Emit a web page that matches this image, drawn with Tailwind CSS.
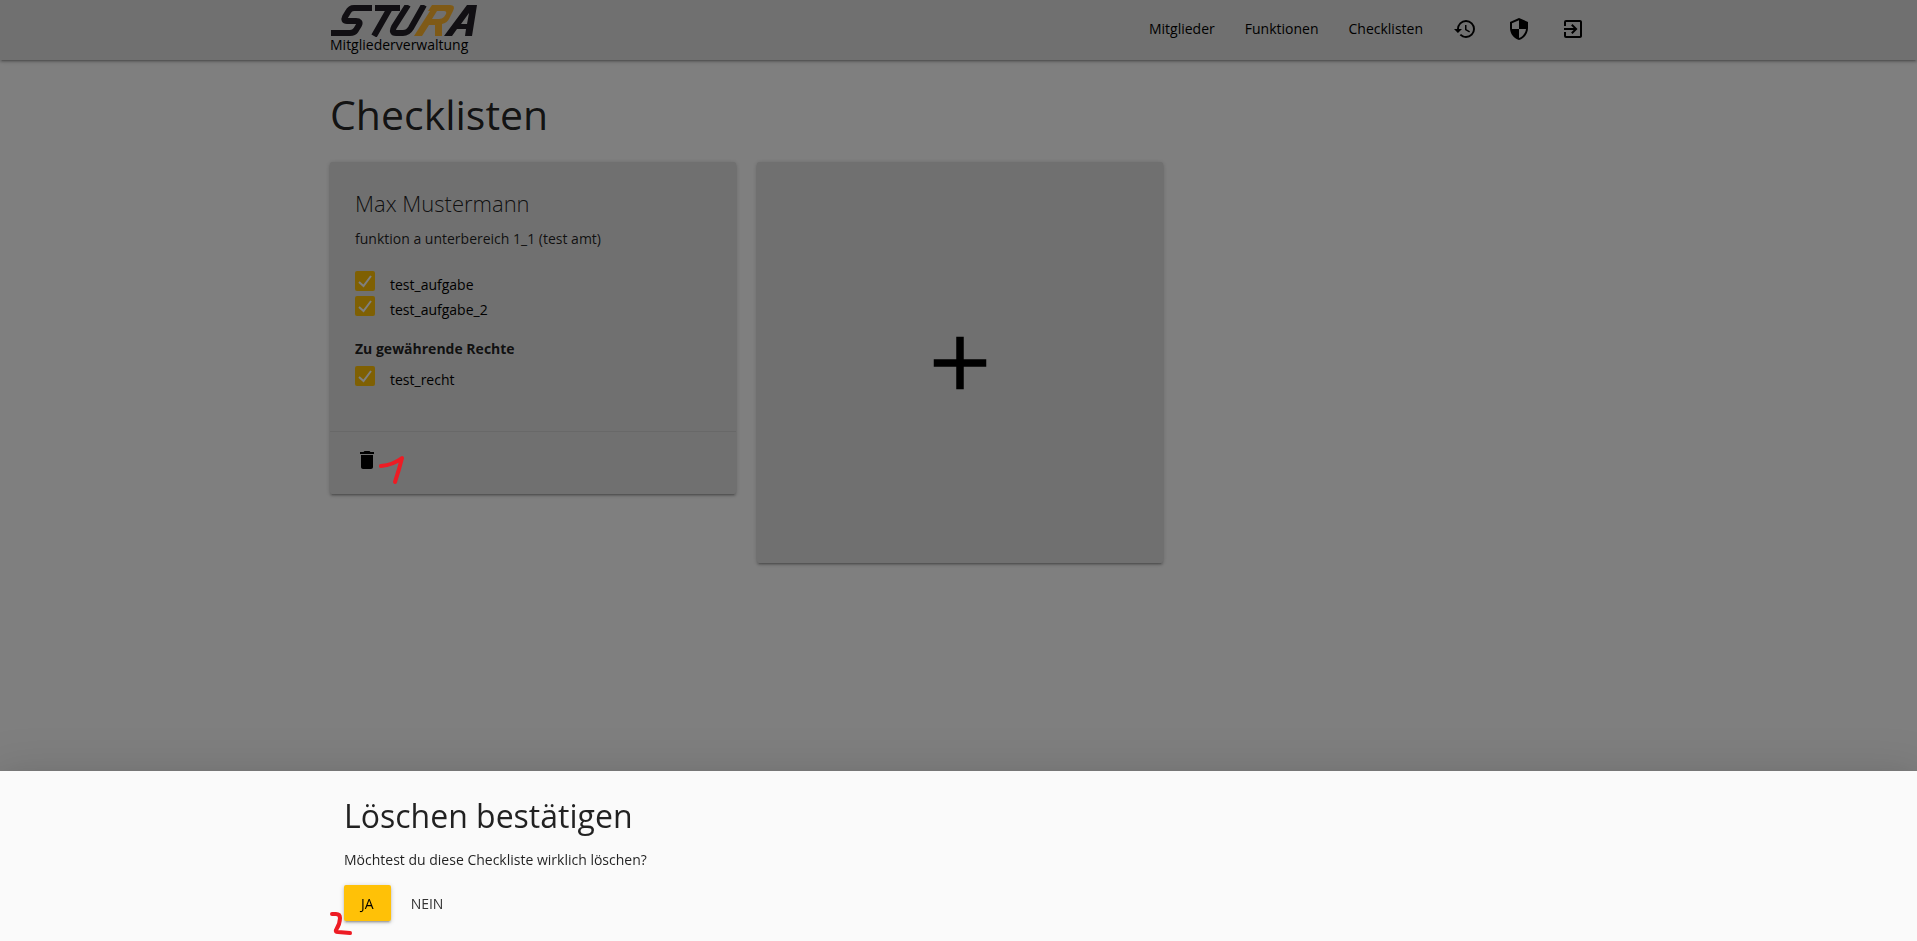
<!DOCTYPE html>
<html lang="de">
<head>
<meta charset="utf-8">
<title>STURA Mitgliederverwaltung</title>
<script src="https://cdn.jsdelivr.net/npm/@tailwindcss/browser@4"></script>
</head>
<body class="min-h-screen overflow-hidden bg-white font-['Open_Sans','Noto_Sans',sans-serif] text-[14px] leading-[21px] text-black/87">
<header class="h-[60px] bg-[#e0e0e0] shadow-[0_2px_2px_0_rgba(0,0,0,0.14),0_3px_1px_-2px_rgba(0,0,0,0.12),0_1px_5px_0_rgba(0,0,0,0.2)]">
  <div class="mx-auto flex h-full max-w-[1283px] items-start justify-between pl-[13px] text-black">
    <a href="#" class="flex flex-col pt-[5px]">
      <svg class="h-[32px] w-[148px]" viewBox="0 0 148 32" aria-label="STURA" role="img">
        <g fill="none" stroke="#231f26" stroke-width="6">
          <path d="M42 3H24Q20 3 18 7L15 12Q13 16 17 16H26Q31 16 29 20L26 25Q24 28 20 28H1"/>
          <path d="M45 3H70M60 3L44 31" />
          <path d="M78 0L64 22Q61 28 66 28H73Q78 28 81 23L94 0"/>
        </g>
        <path d="M137 0H147L142 31H135L136 24H127L122 31H114ZM139 8L131 19H137Z" fill="#231f26" fill-rule="evenodd"/>
        <path d="M102 0H120Q126 0 123 6L119 14Q117 18 112 19L112 31H105L105 20H99L92 31H84L100 6H98ZM107 6L102 14H109Q112 14 114 12L116 9Q117 6 114 6Z" fill="#ffb52e" fill-rule="evenodd"/>
      </svg>
      <span class="-mt-[2px] leading-[20px]">Mitgliederverwaltung</span>
    </a>
    <nav class="flex h-[57px] items-center">
      <a href="#" class="px-[15px]">Mitglieder</a>
      <a href="#" class="px-[15px]">Funktionen</a>
      <a href="#" class="px-[15px]">Checklisten</a>
      <a href="#" aria-label="Verlauf" class="px-[15px]"><svg class="size-6" viewBox="0 0 24 24"><path d="M13 3a9 9 0 0 0-9 9H1l3.890 3.890.07.14L9 12H6c0-3.870 3.130-7 7-7s7 3.130 7 7-3.130 7-7 7c-1.930 0-3.680-.79-4.940-2.060l-1.420 1.420A8.954 8.954 0 0 0 13 21a9 9 0 0 0 0-18zm-1 5v5l4.280 2.540.72-1.210-3.500-2.080V8H12z"/></svg></a>
      <a href="#" aria-label="Administration" class="px-[15px]"><svg class="size-6" viewBox="0 0 24 24"><path d="M12 1L3 5v6c0 5.550 3.840 10.740 9 12 5.160-1.260 9-6.450 9-12V5l-9-4zm0 10.990h7c-.53 4.120-3.280 7.790-7 8.940V12H5V6.300l7-3.110v8.800z"/></svg></a>
      <a href="#" aria-label="Abmelden" class="px-[15px]"><svg class="size-6" viewBox="0 0 24 24"><path d="M10.090 15.590L11.500 17l5-5-5-5-1.410 1.410L12.670 11H3v2h9.670l-2.580 2.590zM19 3H5a2 2 0 0 0-2 2v4h2V5h14v14H5v-4H3v4a2 2 0 0 0 2 2h14c1.100 0 2-.9 2-2V5c0-1.100-.9-2-2-2z"/></svg></a>
    </nav>
  </div>
</header>

<main class="mx-auto max-w-[1283px] pl-[13px] pr-[10px]">
  <h1 class="pt-[28px] text-[41px] leading-[52px]">Checklisten</h1>
  <div class="mt-[22px] grid grid-cols-3 items-start gap-[21px]">
    <section class="rounded-[2px] bg-[#e0e0e0] shadow-[0_2px_2px_0_rgba(0,0,0,0.14),0_3px_1px_-2px_rgba(0,0,0,0.12),0_1px_5px_0_rgba(0,0,0,0.2)]">
      <div class="px-[25px] pt-[23px] pb-[40px]">
        <h2 class="text-[22px] leading-[36px] font-light">Max Mustermann</h2>
        <p class="mt-[7px]">funktion a unterbereich 1_1 (test amt)</p>
        <ul class="mt-[22px] text-black">
          <li><label class="flex h-[25px] items-start gap-[15px]"><span class="grid"><input type="checkbox" checked class="col-start-1 row-start-1 size-5 appearance-none rounded-[2px] bg-[#ffc107]"><svg class="col-start-1 row-start-1 size-5" viewBox="0 0 20 20"><path d="M4 11L8.500 15L16 5" fill="none" stroke="#fff" stroke-width="2"/></svg></span><span class="pt-[3px]">test_aufgabe</span></label></li>
          <li><label class="flex h-[25px] items-start gap-[15px]"><span class="grid"><input type="checkbox" checked class="col-start-1 row-start-1 size-5 appearance-none rounded-[2px] bg-[#ffc107]"><svg class="col-start-1 row-start-1 size-5" viewBox="0 0 20 20"><path d="M4 11L8.500 15L16 5" fill="none" stroke="#fff" stroke-width="2"/></svg></span><span class="pt-[3px]">test_aufgabe_2</span></label></li>
        </ul>
        <h3 class="mt-[17px] font-bold">Zu gewährende Rechte</h3>
        <ul class="mt-[7px] text-black">
          <li><label class="flex h-[25px] items-start gap-[15px]"><span class="grid"><input type="checkbox" checked class="col-start-1 row-start-1 size-5 appearance-none rounded-[2px] bg-[#ffc107]"><svg class="col-start-1 row-start-1 size-5" viewBox="0 0 20 20"><path d="M4 11L8.500 15L16 5" fill="none" stroke="#fff" stroke-width="2"/></svg></span><span class="pt-[3px]">test_recht</span></label></li>
        </ul>
      </div>
      <div class="flex h-[63px] items-start border-t border-[#d0d0d0] px-[25px] pt-[16px]">
        <button type="button" aria-label="Löschen"><svg class="size-6" viewBox="0 0 24 24"><path d="M6 19c0 1.100.9 2 2 2h8c1.100 0 2-.9 2-2V7H6v12zM19 4h-3.500l-1-1h-5l-1 1H5v2h14V4z"/></svg></button>
      </div>
    </section>
    <button type="button" aria-label="Checkliste hinzufügen" class="flex h-[401px] items-center justify-center rounded-[2px] bg-[#e0e0e0] shadow-[0_2px_2px_0_rgba(0,0,0,0.14),0_3px_1px_-2px_rgba(0,0,0,0.12),0_1px_5px_0_rgba(0,0,0,0.2)]"><svg class="size-[90px]" viewBox="0 0 24 24"><path d="M19 13h-6v6h-2v-6H5v-2h6V5h2v6h6v2z"/></svg></button>
  </div>
</main>

<div class="fixed inset-0 bg-black/50"></div>

<div role="dialog" aria-labelledby="confirm-title" class="fixed inset-x-0 bottom-0 bg-[#fafafa] shadow-[0_24px_38px_3px_rgba(0,0,0,0.14),0_9px_46px_8px_rgba(0,0,0,0.12),0_11px_15px_-7px_rgba(0,0,0,0.2)]">
  <div class="mx-auto max-w-[1283px] pt-[24px] pr-[24px] pb-[20px] pl-[27px]">
    <h2 id="confirm-title" class="text-[32px] leading-[42px]">Löschen bestätigen</h2>
    <p class="mt-[12px]">Möchtest du diese Checkliste wirklich löschen?</p>
    <div class="mt-[15px] flex">
      <button type="button" class="h-9 rounded-[2px] bg-[#ffc107] px-[17px] text-black shadow-[0_2px_2px_0_rgba(0,0,0,0.14),0_3px_1px_-2px_rgba(0,0,0,0.12),0_1px_5px_0_rgba(0,0,0,0.2)]">JA</button>
      <button type="button" class="h-9 px-5 text-[#343434]">NEIN</button>
    </div>
  </div>
</div>

<svg class="pointer-events-none absolute top-[452px] left-[376px] h-[36px] w-[32px]" viewBox="376 452 32 36" aria-hidden="true"><path d="M381 466Q393 465 402 458Q399 470 395 482" fill="none" stroke="#ed1c24" stroke-width="4" stroke-linecap="round" stroke-linejoin="round"/></svg>
<svg class="pointer-events-none fixed bottom-0 left-[328px] h-[32px] w-[28px]" viewBox="328 909 28 32" aria-hidden="true"><path d="M332 914H336Q340 914 340 918Q340 924 336 930Q335 932 338 932L350 933" fill="none" stroke="#ed1c24" stroke-width="4" stroke-linecap="round" stroke-linejoin="round"/></svg>
</body>
</html>
